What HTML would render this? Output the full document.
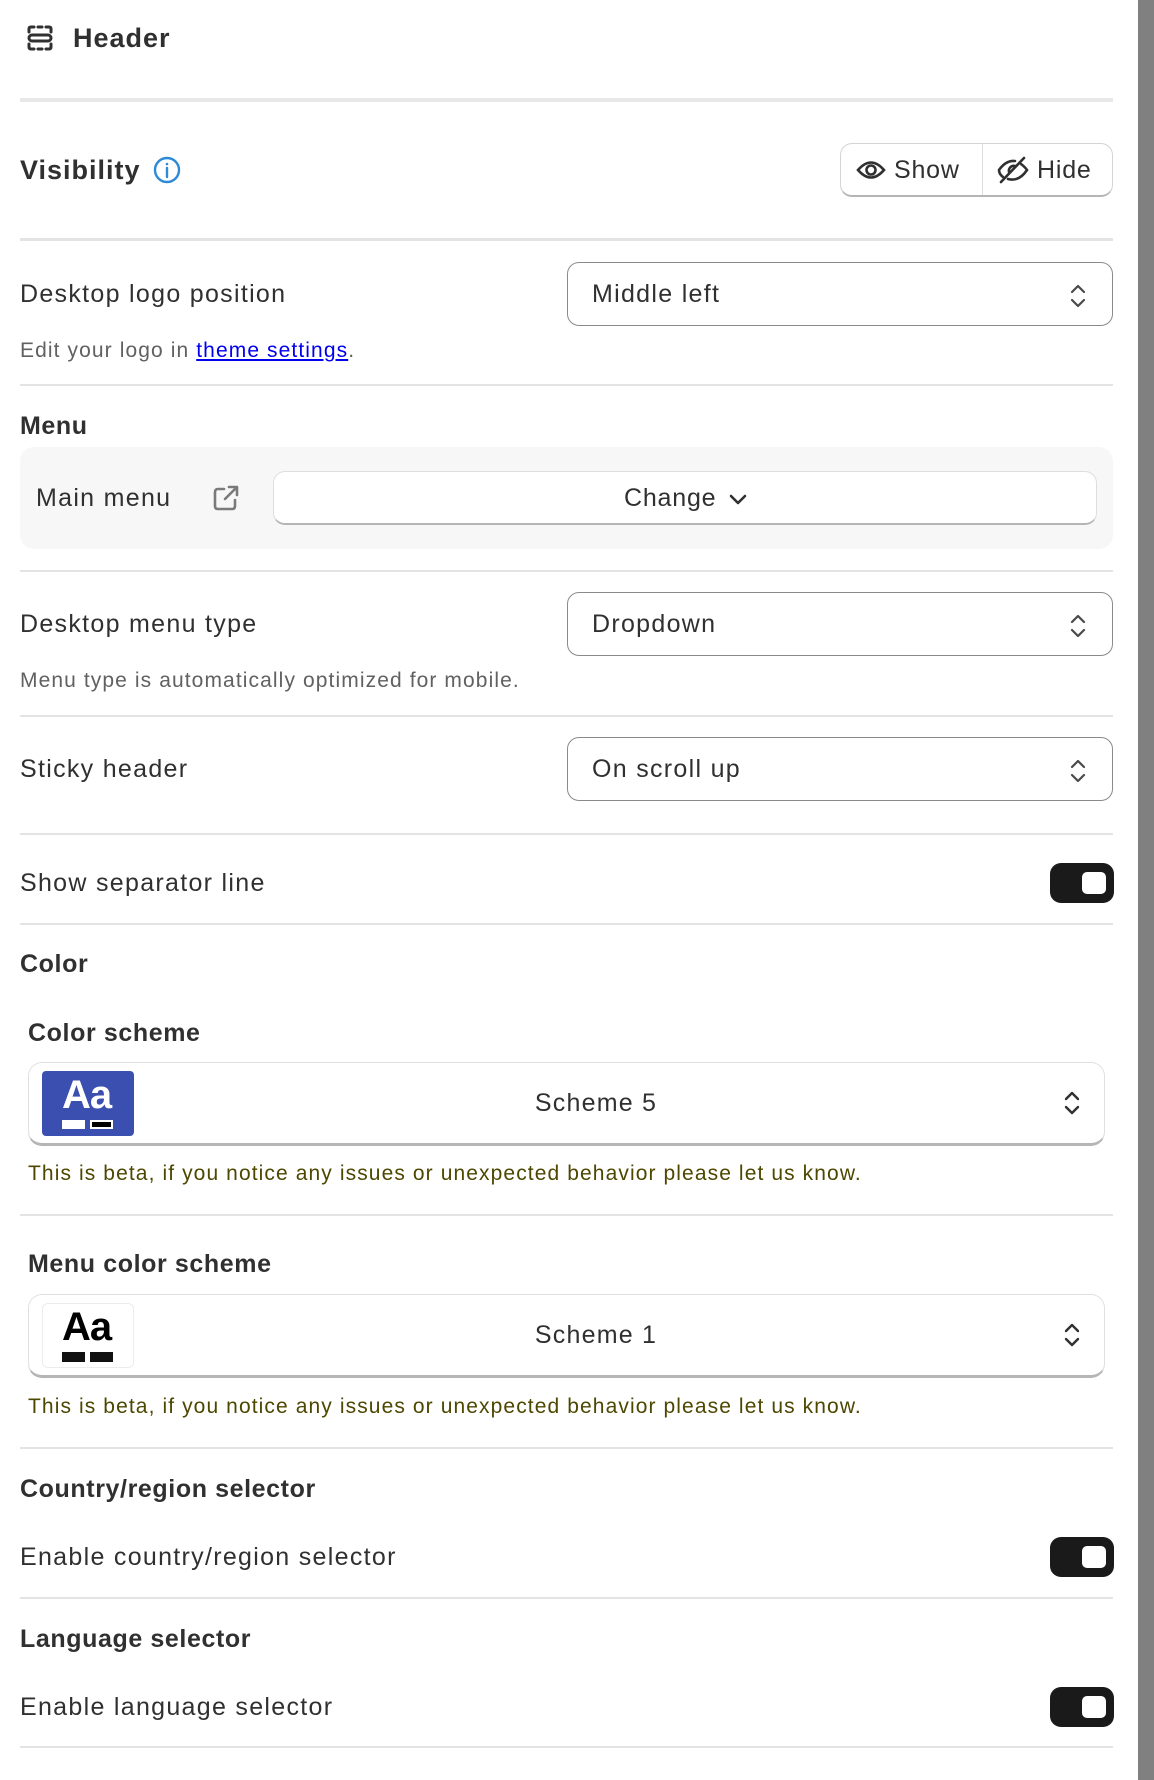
<!DOCTYPE html>
<html><head><meta charset="utf-8">
<style>
*{box-sizing:border-box;margin:0;padding:0}
body{width:1154px;height:1780px;background:#fff;position:relative;overflow:hidden;font-family:"Liberation Sans",Arial,sans-serif;color:#303030}
.a{position:absolute}
.t{position:absolute;line-height:30px;font-size:25px;white-space:nowrap;letter-spacing:1.3px}
.b{font-weight:bold;color:#303030;letter-spacing:0.6px}
.hr{position:absolute;left:20px;width:1093px;height:2px;background:#e3e3e3}
.sel{position:absolute;left:567px;width:546px;height:64px;border:1px solid #8a8a8a;border-radius:12px;background:#fff}
.sel span{position:absolute;left:24px;top:16px;font-size:25px;line-height:30px;color:#303030;letter-spacing:1.3px}
.sel svg{position:absolute;right:24px;top:19px}
.tog{position:absolute;left:1050px;width:64px;height:40px;border-radius:11px;background:#1a1a1a}
.tog i{position:absolute;right:8px;top:9px;width:24px;height:22px;border-radius:5px;background:#fff}
.help{position:absolute;font-size:21px;line-height:26px;color:#616161;white-space:nowrap;letter-spacing:1.1px}
.beta{position:absolute;left:28px;font-size:21px;line-height:26px;color:#4d4700;white-space:nowrap;letter-spacing:1.1px}
.sch{position:absolute;left:28px;width:1077px;height:84px;border:1px solid #e0e0e0;border-bottom:3px solid #b5b5b5;border-radius:14px;background:#fff}
.sn{position:absolute;left:0;width:1134px;top:25px;text-align:center;font-size:25px;line-height:30px;letter-spacing:1.2px}
</style></head><body>
<div class="a" style="left:1138px;top:0;width:16px;height:1780px;background:#808080"></div>

<svg class="a" style="left:26px;top:24px" width="28" height="28" viewBox="0 0 28 28" fill="none" stroke="#303030" stroke-width="3" stroke-linecap="round">
<path d="M3 8V5q0-2 2-2h3M12 3h4M20 3h3q2 0 2 2v3M3 20v3q0 2 2 2h3M12 25h4M20 25h3q2 0 2-2v-3"/>
<rect x="3" y="11" width="22" height="6" rx="3"/>
</svg>
<div class="t b" style="left:73px;top:23px;font-size:27px;letter-spacing:1px">Header</div>
<div class="a" style="left:20px;top:98px;width:1093px;height:4px;background:#e8e8e8"></div>

<div class="t b" style="left:20px;top:155px;font-size:27px;letter-spacing:1px">Visibility</div>
<svg class="a" style="left:153px;top:156px" width="28" height="28" viewBox="0 0 28 28" fill="none" stroke="#2c8ad6" stroke-width="2.4"><circle cx="14" cy="14" r="12"/><path d="M14 12v9" stroke-linecap="round"/><circle cx="14" cy="8" r="1.3" fill="#2c8ad6" stroke="none"/></svg>

<div class="a" style="left:840px;top:143px;width:273px;height:54px;border:1px solid #d4d4d4;border-bottom:2px solid #b5b5b5;border-radius:12px"></div>
<div class="a" style="left:982px;top:144px;width:1px;height:51px;background:#dcdcdc"></div>
<svg class="a" style="left:856px;top:156px" width="30" height="28" viewBox="0 0 30 28" fill="none" stroke="#303030" stroke-width="2.6"><path d="M2 14Q15 -1 28 14Q15 29 2 14Z"/><circle cx="15" cy="14" r="4.5"/></svg>
<div class="t" style="left:894px;top:155px;font-size:25px;letter-spacing:0.8px">Show</div>
<svg class="a" style="left:997px;top:155px" width="32" height="30" viewBox="0 0 32 30" fill="none" stroke="#303030" stroke-width="2.6" stroke-linecap="round"><path d="M6 22Q2 19 2 15Q9 5 18 6M24 9Q28 12 30 15Q22 27 11 24"/><path d="M12 17a5 5 0 0 1 6-6"/><path d="M27 3L4 27"/></svg>
<div class="t" style="left:1037px;top:155px;font-size:25px;letter-spacing:0.8px">Hide</div>

<div class="hr" style="top:238px;height:3px"></div>

<div class="t" style="left:20px;top:279px">Desktop logo position</div>
<div class="sel" style="top:262px"><span>Middle left</span><svg width="20" height="28" viewBox="0 0 20 28" fill="none" stroke="#4a4a4a" stroke-width="2.2" stroke-linecap="round" stroke-linejoin="round"><path d="M4 10l6-6 6 6M4 18l6 6 6-6"/></svg></div>
<div class="help" style="left:20px;top:338px">Edit your logo in <span style="color:#0000ee;text-decoration:underline">theme settings</span>.</div>
<div class="hr" style="top:384px"></div>

<div class="t b" style="left:20px;top:411px">Menu</div>
<div class="a" style="left:20px;top:447px;width:1093px;height:102px;background:#f7f7f7;border-radius:14px"></div>
<div class="t" style="left:36px;top:483px">Main menu</div>
<svg class="a" style="left:212px;top:484px" width="28" height="28" viewBox="0 0 28 28" fill="none" stroke="#7a7a7a" stroke-width="2.6" stroke-linecap="round" stroke-linejoin="round"><path d="M12 5H6q-3 0-3 3v14q0 3 3 3h14q3 0 3-3v-6"/><path d="M17 3h8v8M25 3L13 15"/></svg>
<div class="a" style="left:273px;top:471px;width:824px;height:54px;background:#fff;border:1px solid #dedede;border-bottom:2px solid #b5b5b5;border-radius:12px"></div>
<div class="t" style="left:624px;top:483px;letter-spacing:0.8px">Change</div>
<svg class="a" style="left:728px;top:492px" width="20" height="14" viewBox="0 0 20 14" fill="none" stroke="#303030" stroke-width="2.6" stroke-linecap="round" stroke-linejoin="round"><path d="M3 4l7 7 7-7"/></svg>
<div class="hr" style="top:570px"></div>

<div class="t" style="left:20px;top:609px">Desktop menu type</div>
<div class="sel" style="top:592px"><span>Dropdown</span><svg width="20" height="28" viewBox="0 0 20 28" fill="none" stroke="#4a4a4a" stroke-width="2.2" stroke-linecap="round" stroke-linejoin="round"><path d="M4 10l6-6 6 6M4 18l6 6 6-6"/></svg></div>
<div class="help" style="left:20px;top:668px">Menu type is automatically optimized for mobile.</div>
<div class="hr" style="top:715px"></div>

<div class="t" style="left:20px;top:754px">Sticky header</div>
<div class="sel" style="top:737px"><span>On scroll up</span><svg width="20" height="28" viewBox="0 0 20 28" fill="none" stroke="#4a4a4a" stroke-width="2.2" stroke-linecap="round" stroke-linejoin="round"><path d="M4 10l6-6 6 6M4 18l6 6 6-6"/></svg></div>
<div class="hr" style="top:833px"></div>

<div class="t" style="left:20px;top:868px">Show separator line</div>
<div class="tog" style="top:863px"><i></i></div>
<div class="hr" style="top:923px"></div>

<div class="t b" style="left:20px;top:949px">Color</div>
<div class="t b" style="left:28px;top:1018px">Color scheme</div>
<div class="sch" style="top:1062px">
 <div class="a" style="left:13px;top:8px;width:92px;height:65px;background:#3b4fb0;border-radius:4px">
  <div class="a" style="left:20px;top:2px;font-size:40px;line-height:44px;color:#fff;font-weight:bold;letter-spacing:-1px">Aa</div>
  <div class="a" style="left:20px;top:49px;width:23px;height:9px;background:#fff"></div>
  <div class="a" style="left:48px;top:49px;width:23px;height:9px;background:#000;border:2px solid #fff"></div>
 </div>
 <div class="sn">Scheme 5</div>
 <svg class="a" style="right:22px;top:26px" width="20" height="28" viewBox="0 0 20 28" fill="none" stroke="#303030" stroke-width="2.4" stroke-linecap="round" stroke-linejoin="round"><path d="M4 10l6-6 6 6M4 18l6 6 6-6"/></svg>
</div>
<div class="beta" style="top:1161px">This is beta, if you notice any issues or unexpected behavior please let us know.</div>
<div class="hr" style="top:1214px"></div>

<div class="t b" style="left:28px;top:1249px">Menu color scheme</div>
<div class="sch" style="top:1294px">
 <div class="a" style="left:13px;top:8px;width:92px;height:65px;background:#fff;border:1px solid #ececec;border-radius:6px">
  <div class="a" style="left:19px;top:1px;font-size:40px;line-height:44px;color:#000;font-weight:bold;letter-spacing:-1px">Aa</div>
  <div class="a" style="left:19px;top:48px;width:23px;height:10px;background:#111"></div>
  <div class="a" style="left:47px;top:48px;width:23px;height:10px;background:#111"></div>
 </div>
 <div class="sn">Scheme 1</div>
 <svg class="a" style="right:22px;top:26px" width="20" height="28" viewBox="0 0 20 28" fill="none" stroke="#303030" stroke-width="2.4" stroke-linecap="round" stroke-linejoin="round"><path d="M4 10l6-6 6 6M4 18l6 6 6-6"/></svg>
</div>
<div class="beta" style="top:1394px">This is beta, if you notice any issues or unexpected behavior please let us know.</div>
<div class="hr" style="top:1447px"></div>

<div class="t b" style="left:20px;top:1474px">Country/region selector</div>
<div class="t" style="left:20px;top:1542px">Enable country/region selector</div>
<div class="tog" style="top:1537px"><i></i></div>
<div class="hr" style="top:1597px"></div>

<div class="t b" style="left:20px;top:1624px">Language selector</div>
<div class="t" style="left:20px;top:1692px">Enable language selector</div>
<div class="tog" style="top:1687px"><i></i></div>
<div class="hr" style="top:1746px"></div>
</body></html>
